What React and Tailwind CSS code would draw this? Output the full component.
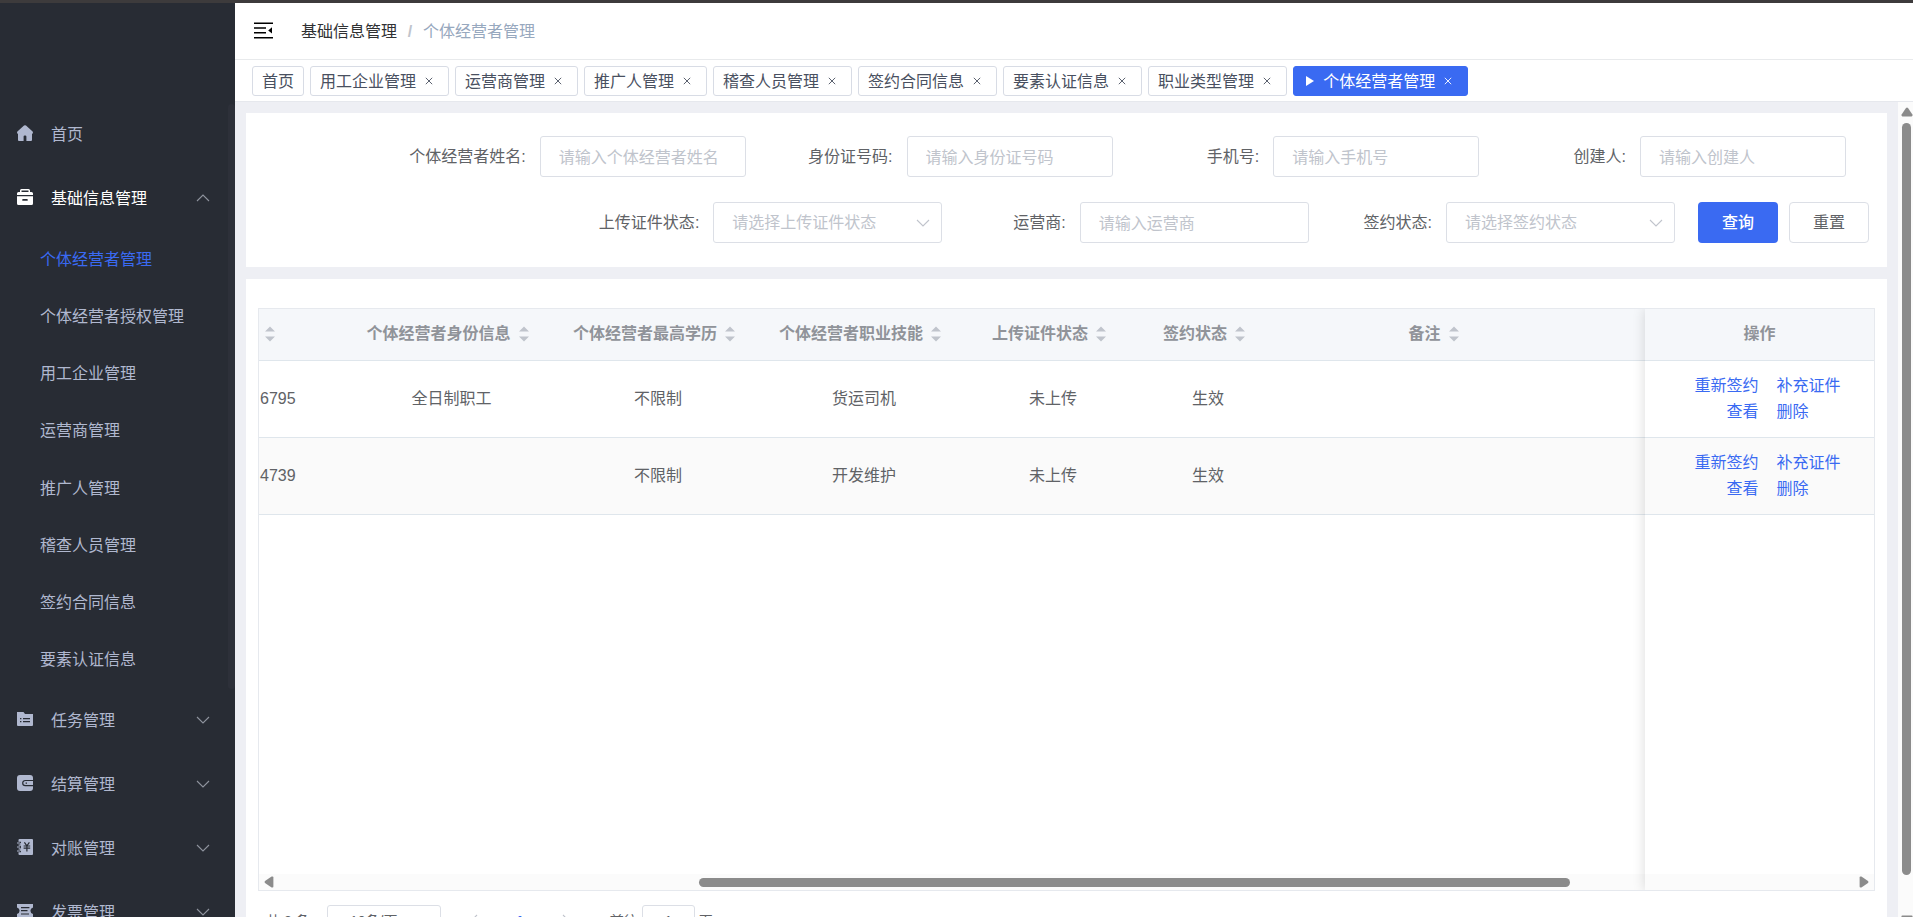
import clsx from 'clsx'

const subMenus = [
  '个体经营者管理',
  '个体经营者授权管理',
  '用工企业管理',
  '运营商管理',
  '推广人管理',
  '稽查人员管理',
  '签约合同信息',
  '要素认证信息',
]

const tabs = ['用工企业管理', '运营商管理', '推广人管理', '稽查人员管理', '签约合同信息', '要素认证信息', '职业类型管理']

const columns = [
  { label: '个体经营者身份信息', width: 'w-[207px]' },
  { label: '个体经营者最高学历', width: 'w-[206px]' },
  { label: '个体经营者职业技能', width: 'w-[206px]' },
  { label: '上传证件状态', width: 'w-[172px]' },
  { label: '签约状态', width: 'w-[138px]' },
  { label: '备注', width: 'w-[321px]' },
]

const rows = [
  { no: '6795', cells: ['全日制职工', '不限制', '货运司机', '未上传', '生效', ''] },
  { no: '4739', cells: ['', '不限制', '开发维护', '未上传', '生效', ''] },
]

const HomeIcon = () => (
  <svg viewBox="0 0 16 16" className="size-4" fill="currentColor">
    <path d="M7 0.6 Q8 -0.3 9 0.6 L15.6 6.4 Q16.4 7.6 15.4 8.8 H15 V15 Q15 16 14 16 H9.4 V11.6 Q9.4 10.4 8.2 10.4 H7.8 Q6.6 10.4 6.6 11.6 V16 H2 Q1 16 1 15 V8.8 H0.6 Q-0.4 7.6 0.4 6.4 Z" />
  </svg>
)

const BaseIcon = () => (
  <svg viewBox="0 0 16 16" className="size-4" fill="currentColor">
    <path fillRule="evenodd" d="M4.5 0 H11.5 Q13 0 13 1.5 V3 H14.5 Q16 3 16 4.5 V6 H0 V4.5 Q0 3 1.5 3 H3 V1.5 Q3 0 4.5 0 Z M4.5 1.5 V3 H11.5 V1.5 Z" />
    <path fillRule="evenodd" d="M0 7.2 H16 V14.5 Q16 16 14.5 16 H1.5 Q0 16 0 14.5 Z M6 10 Q5.2 10 5.2 10.9 Q5.2 11.8 6 11.8 H10 Q10.8 11.8 10.8 10.9 Q10.8 10 10 10 Z" />
  </svg>
)

const TaskIcon = () => (
  <svg viewBox="0 0 16 16" className="size-4" fill="currentColor">
    <path
      fillRule="evenodd"
      d="M0 1 H6.5 L8 3 H16 V14 Q16 15 15 15 H1 Q0 15 0 14 Z M3 7 V8.2 H4.4 V7 Z M6 7 V8.2 H13 V7 Z M3 10 V11.2 H4.4 V10 Z M6 10 V11.2 H13 V10 Z"
    />
  </svg>
)

const SettleIcon = () => (
  <svg viewBox="0 0 16 16" className="size-4">
    <rect width="16" height="16" rx="3" fill="currentColor" />
    <path d="M16 5.5 H8.3 A2.6 2.6 0 0 0 8.3 10.7 H16" fill="none" stroke="#282c34" strokeWidth="1.2" />
    <path d="M8.6 8.1 H10" stroke="#282c34" strokeWidth="1.2" />
  </svg>
)

const AccountIcon = () => (
  <svg viewBox="0 0 16 16" className="size-4">
    <path d="M2.5 0 H15 Q16 0 16 1 V15 Q16 16 15 16 H2.5 Q1.5 16 1.5 15 V1 Q1.5 0 2.5 0 Z" fill="currentColor" />
    <path d="M0 4.2 H4 M0 8 H4 M0 11.8 H4" stroke="#282c34" strokeWidth="2.8" />
    <path
      d="M0 4 H2.4 Q3.8 4 3.8 5.4 Q3.8 6.6 2.6 6.6 M0 8 H3.2 M0 12 H2.4 Q3.8 12 3.8 10.8 Q3.8 9.6 2.6 9.6"
      fill="none"
      stroke="currentColor"
      strokeWidth="1"
    />
    <path d="M7.4 3.4 L9.9 6.8 L12.4 3.4 M6.6 7 H13.2 M6.6 9.2 H13.2 M9.9 7 V12.4" fill="none" stroke="#282c34" strokeWidth="1.2" />
  </svg>
)

const InvoiceIcon = () => (
  <svg viewBox="0 0 16 16" className="size-4">
    <path d="M0 1 H16 V4.6 Q13.4 5.4 13.4 7.8 Q13.4 10.2 16 11 V15 H0 V11 Q2.6 10.2 2.6 7.8 Q2.6 5.4 0 4.6 Z" fill="currentColor" />
    <path d="M4 4.6 H12.4 M4 7.6 H10.5 M4 11 H12" stroke="#282c34" strokeWidth="1.2" />
  </svg>
)

const Chevron = ({ className }) => (
  <svg viewBox="0 0 14 8" className={clsx('h-2 w-3.5 shrink-0', className)} fill="none" stroke="currentColor" strokeWidth="1.1">
    <path d="M1 1 L7 7 L13 1" />
  </svg>
)

const CloseIcon = () => (
  <svg viewBox="0 0 8 8" className="size-2" fill="none" stroke="currentColor" strokeWidth="0.9">
    <path d="M0.8 0.8 L7.2 7.2 M7.2 0.8 L0.8 7.2" />
  </svg>
)

const SortIcon = () => (
  <span className="inline-flex w-6 justify-center pr-0.5">
    <svg viewBox="0 0 10 16" className="h-4 w-2.5" fill="#c0c4cc">
      <path d="M0 5.5 L5 0.5 L10 5.5 Z M0 10.5 L5 15.5 L10 10.5 Z" />
    </svg>
  </span>
)

const ScrollArrow = ({ className }) => (
  <svg viewBox="0 0 12 10" className={clsx('h-2.5 w-3', className)} fill="#8b8b8b">
    <path d="M5 1 Q6 0 7 1 L11.4 7.6 Q12 9.4 10.6 9.4 H1.4 Q0 9.4 0.6 7.6 Z" />
  </svg>
)

const MenuItem = ({ icon, label, active, open, leaf }) => (
  <a
    href="#"
    className={clsx('flex h-16 shrink-0 items-center pr-[25px] pl-[17px]', active ? 'text-white' : 'text-[#b0b8cf]')}
  >
    <span className="pb-0.5">{icon}</span>
    <span className="ml-[18px] flex-1 pt-0.5">{label}</span>
    {!leaf && <Chevron className={clsx('text-[#8f949e]', open && 'rotate-180')} />}
  </a>
)

const Sidebar = () => (
  <aside className="relative w-[235px] shrink-0 overflow-hidden bg-[#282c34] pt-[99px]">
    <nav className="flex flex-col">
      <MenuItem icon={<HomeIcon />} label="首页" leaf />
      <MenuItem icon={<BaseIcon />} label="基础信息管理" active open />
      <div className="flex h-[458px] flex-col">
        {subMenus.map((name, i) => (
          <a
            key={name}
            href="#"
            className={clsx('flex flex-1 items-center pt-0.5 pl-10', i === 0 ? 'text-[#3a6af2]' : 'text-[#b0b8cf]')}
          >
            {name}
          </a>
        ))}
      </div>
      <MenuItem icon={<TaskIcon />} label="任务管理" />
      <MenuItem icon={<SettleIcon />} label="结算管理" />
      <MenuItem icon={<AccountIcon />} label="对账管理" />
      <MenuItem icon={<InvoiceIcon />} label="发票管理" />
    </nav>
    <div className="absolute top-[101px] right-0 h-[585px] w-[7px] rounded-full bg-[#2d3039]" />
  </aside>
)

const Header = () => (
  <header className="flex h-[57px] shrink-0 items-center border-b border-[#e8eaec] px-[19px]">
    <button type="button" aria-label="折叠菜单" className="pb-0.5 text-black">
      <svg viewBox="0 0 19 17" className="h-[17px] w-[19px]" fill="currentColor">
        <path d="M0 0.5 H19 V2 H0 Z M0 5.3 H12 V6.8 H0 Z M0 10 H12 V11.5 H0 Z M0 14.9 H19 V16.4 H0 Z M18 5.2 V11.6 L14.2 8.4 Z" />
      </svg>
    </button>
    <nav className="ml-7 flex pt-0.5">
      <a href="#" className="text-[#303133]">基础信息管理</a>
      <span className="mx-[9px] w-2 text-center font-bold text-[#c0c4cc]">/</span>
      <span className="text-[#97a8be]">个体经营者管理</span>
    </nav>
  </header>
)

const Tab = ({ label, active, closable = true }) => (
  <div
    className={clsx(
      'flex h-[30px] items-center rounded-[3px] border px-[9px]',
      active ? 'border-[#3a6af2] bg-[#3a6af2] text-white' : 'border-[#d8dce5] bg-white text-[#495060]',
    )}
  >
    {active && (
      <svg viewBox="0 0 8 10" className="mr-[9px] ml-[3px] h-2.5 w-2" fill="currentColor">
        <path d="M0 0 L8 5 L0 10 Z" />
      </svg>
    )}
    <a href="#" className="pt-0.5">{label}</a>
    {closable && (
      <button type="button" aria-label={`关闭${label}`} className="mr-[3px] ml-1.5 flex h-4 w-3.5 items-center justify-center">
        <CloseIcon />
      </button>
    )}
  </div>
)

const Field = ({ id, label, placeholder, select, width }) => (
  <div className="flex flex-1 items-center justify-end">
    <label htmlFor={id} className="pr-3.5 text-[#606266]">{label}:</label>
    <div className={clsx('relative', width)}>
      {select ? (
        <>
          <select
            id={id}
            className="h-[41px] w-full appearance-none rounded-[3px] border border-[#dcdfe6] bg-white pt-px pr-8 pl-[18px] text-[#c0c4cc]"
          >
            <option>{placeholder}</option>
          </select>
          <Chevron className="pointer-events-none absolute top-[17px] right-3 text-[#c0c4cc]" />
        </>
      ) : (
        <input
          id={id}
          placeholder={placeholder}
          className="h-[41px] w-full rounded-[3px] border border-[#dcdfe6] bg-white px-[18px] pt-0.5 text-[#606266] placeholder:text-[#c0c4cc]"
        />
      )}
    </div>
  </div>
)

const SearchForm = () => (
  <form className="flex shrink-0 flex-col gap-[25px] bg-white pt-[23px] pb-6">
    <div className="flex pr-[41px] pl-[133px]">
      <Field id="name" label="个体经营者姓名" placeholder="请输入个体经营者姓名" width="w-[206px]" />
      <Field id="idCard" label="身份证号码" placeholder="请输入身份证号码" width="w-[206px]" />
      <Field id="phone" label="手机号" placeholder="请输入手机号" width="w-[206px]" />
      <Field id="creator" label="创建人" placeholder="请输入创建人" width="w-[206px]" />
    </div>
    <div className="flex pr-[18px] pl-[330px]">
      <Field id="certStatus" label="上传证件状态" placeholder="请选择上传证件状态" width="w-[229px]" select />
      <Field id="operator" label="运营商" placeholder="请输入运营商" width="w-[229px]" />
      <Field id="signStatus" label="签约状态" placeholder="请选择签约状态" width="w-[229px]" select />
      <button type="button" className="ml-[23px] h-[41px] w-20 rounded-[4px] bg-[#3a6af2] pt-px font-medium text-white">
        查询
      </button>
      <button type="button" className="ml-[11px] h-[41px] w-20 rounded-[4px] border border-[#dcdfe6] bg-white pt-px text-[#606266]">
        重置
      </button>
    </div>
  </form>
)

const DataTable = () => (
  <div className="relative h-[583px] overflow-hidden border border-[#e6e9ee]">
    <div className="mr-[229px] overflow-hidden">
      <table className="w-full table-fixed border-collapse text-center text-[#606266]">
        <thead>
          <tr className="h-[51px] border-b border-[#dfe6ec] bg-[#f5f7fa] text-[#909399]">
            <th className="w-[89px] text-left">
              <div className="flex h-6 items-center"><SortIcon /></div>
            </th>
            {columns.map((col) => (
              <th key={col.label} className={clsx('font-bold', col.width)}>
                <div className="flex h-6 items-center justify-center gap-0.5">
                  {col.label}
                  <SortIcon />
                </div>
              </th>
            ))}
            <th />
          </tr>
        </thead>
        <tbody>
          {rows.map((row, i) => (
            <tr key={row.no} className={clsx('h-[77px] border-b border-[#dfe6ec]', i % 2 === 1 && 'bg-[#fafafa]')}>
              <td className="pl-px text-left">{row.no}</td>
              {row.cells.map((cell, j) => (
                <td key={columns[j].label}>{cell}</td>
              ))}
              <td />
            </tr>
          ))}
        </tbody>
      </table>
    </div>

    <div className="absolute inset-x-0 bottom-0 flex h-4 items-center justify-between bg-[#fbfbfb] px-1">
      <ScrollArrow className="-rotate-90" />
      <div className="mr-[17.9%] ml-[26.4%] h-[9px] flex-1 rounded-full bg-[#8b8b8b]" />
      <ScrollArrow className="rotate-90" />
    </div>

    {/* fixed right column */}
    <div className="absolute inset-y-0 right-0 w-[229px] shadow-[0_0_12px_rgba(0,0,0,0.15)]">
      <table className="w-full table-fixed border-collapse">
        <thead>
          <tr className="h-[51px] border-b border-[#dfe6ec] bg-[#f5f7fa] text-[#909399]">
            <th className="font-bold">操作</th>
          </tr>
        </thead>
        <tbody>
          {rows.map((row, i) => (
            <tr key={row.no} className={clsx('h-[77px] border-b border-[#dfe6ec]', i % 2 === 1 ? 'bg-[#fafafa]' : 'bg-white')}>
              <td className="pl-4 text-[#3a6af2]">
                <div className="flex h-[26px] items-center justify-center gap-[18px]">
                  <button type="button">重新签约</button>
                  <button type="button">补充证件</button>
                </div>
                <div className="flex h-[26px] items-center justify-center gap-[18px]">
                  <button type="button">查看</button>
                  <button type="button">删除</button>
                </div>
              </td>
            </tr>
          ))}
        </tbody>
      </table>
    </div>
  </div>
)

const Pagination = () => (
  <div className="mt-3.5 flex h-8 items-center pl-2 text-sm text-[#606266]">
    <span className="w-[61px]">共 2 条</span>
    <select
      aria-label="每页条数"
      className="h-8 w-[114px] appearance-none rounded-[3px] border border-[#dcdfe6] pl-[22px]"
    >
      <option>10条/页</option>
    </select>
    <button type="button" aria-label="上一页" className="ml-[26px] text-[#c0c4cc]">
      <Chevron className="rotate-90" />
    </button>
    <button type="button" className="mx-[35px] font-bold text-[#3a6af2]">1</button>
    <button type="button" aria-label="下一页" className="text-[#c0c4cc]">
      <Chevron className="-rotate-90" />
    </button>
    <label htmlFor="page" className="ml-[37px]">前往</label>
    <input id="page" defaultValue="1" className="mx-1 h-8 w-[53px] rounded-[3px] border border-[#dcdfe6] text-center" />
    <span>页</span>
  </div>
)

const App = () => {
  return (
    <div className="flex h-screen flex-col overflow-hidden bg-white font-['Liberation_Sans','Noto_Sans_CJK_SC',sans-serif] text-base">
      <div className="h-[3px] shrink-0 bg-[#3d3b3c]" />
      <div className="flex min-h-0 flex-1">
        <Sidebar />
        <div className="flex min-w-0 flex-1 flex-col">
          <Header />
          <div className="flex h-[42px] shrink-0 gap-1.5 border-b border-[#e6e8ed] px-[17px] pt-1.5">
            <Tab label="首页" closable={false} />
            {tabs.map((name) => (
              <Tab key={name} label={name} />
            ))}
            <Tab label="个体经营者管理" active />
          </div>
          <div className="flex min-h-0 flex-1 bg-[#eeeff4]">
            <main className="flex min-w-0 flex-1 flex-col gap-3 overflow-hidden px-[11px] pt-[11px]">
              <SearchForm />
              <section className="shrink-0 bg-white px-3 pt-[29px]">
                <DataTable />
                <Pagination />
              </section>
            </main>
            <div className="flex w-[15px] shrink-0 flex-col items-center overflow-hidden bg-[#fbfbfb] pt-[5px] pl-0.5">
              <ScrollArrow className="shrink-0" />
              <div className="mt-1.5 mb-10 w-[9px] flex-1 rounded-full bg-[#8b8b8b]" />
              <ScrollArrow className="-mb-2 shrink-0 rotate-180" />
            </div>
          </div>
        </div>
      </div>
    </div>
  )
}

export default App
